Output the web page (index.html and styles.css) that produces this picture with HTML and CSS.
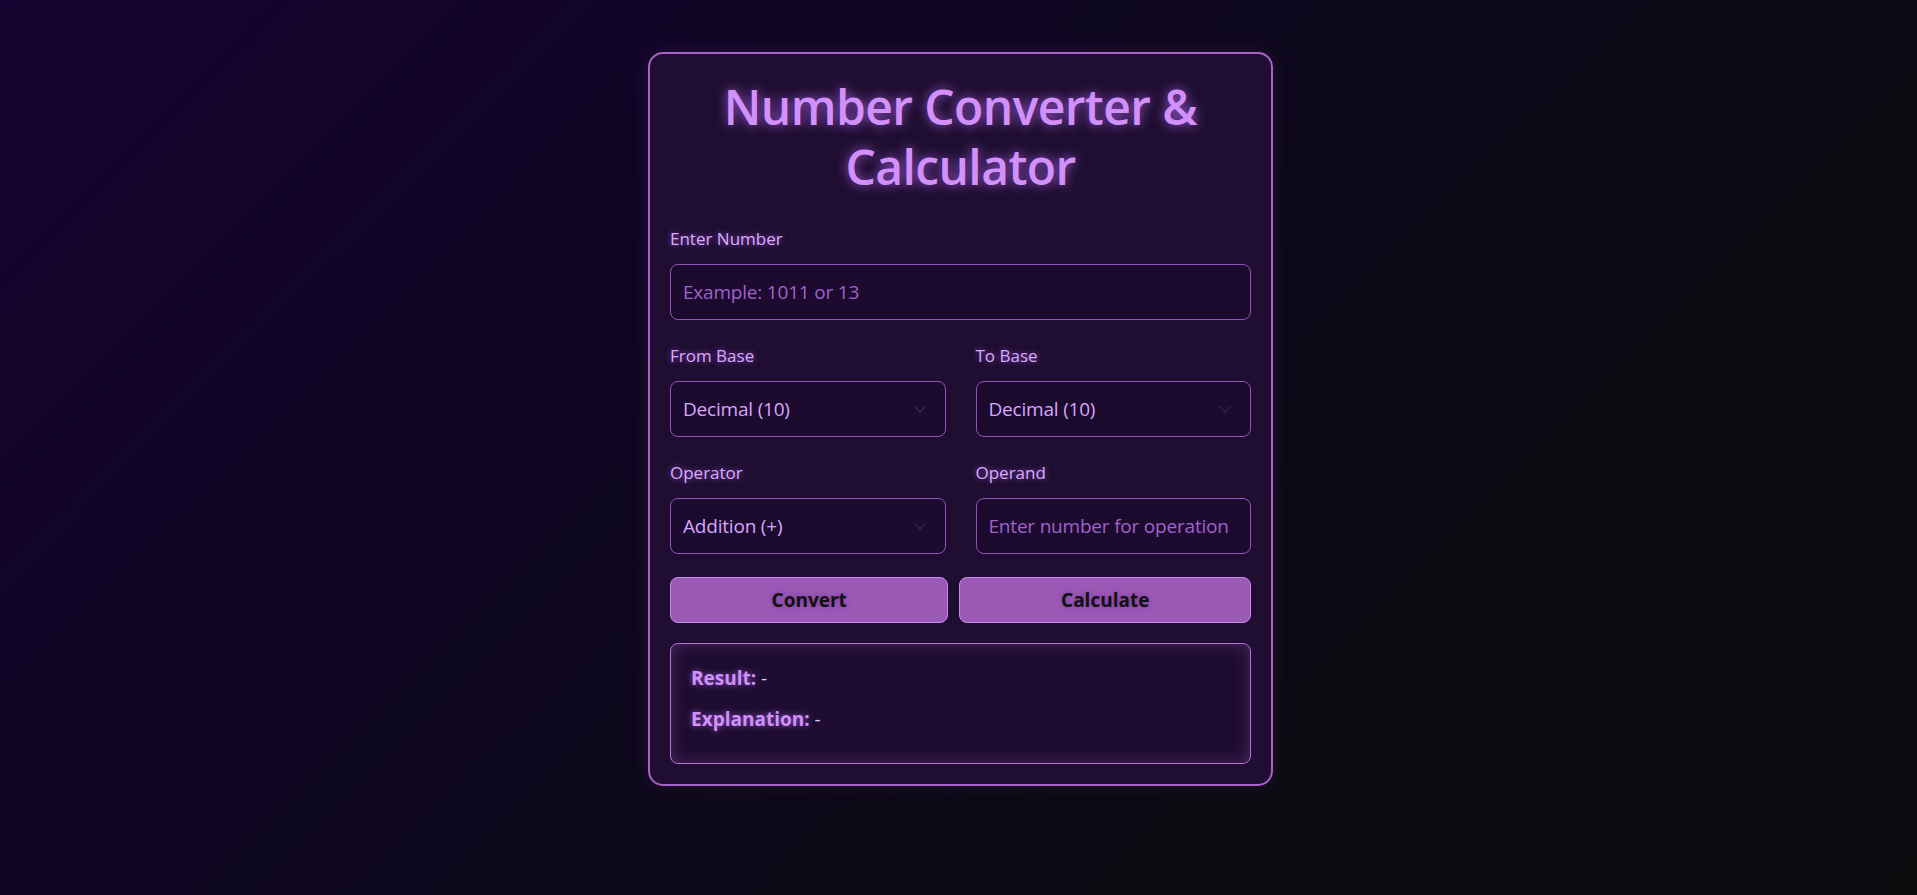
FILE: index.html
```html
<!DOCTYPE html>
<html lang="en">
<head>
    <meta charset="UTF-8">
    <meta name="viewport" content="width=device-width, initial-scale=1.0">
    <title>Number Converter &amp; Calculator</title>
    <link rel="stylesheet" href="styles.css">
</head>
<body>

    <div class="container">
        <h1>Number Converter &amp; Calculator</h1>

        <div class="form-group">
            <label for="number">Enter Number</label>
            <input type="text" id="number" placeholder="Example: 1011 or 13">
        </div>

        <div class="row">
            <div class="form-group">
                <label for="fromBase">From Base</label>
                <div class="select-wrap">
                    <select id="fromBase">
                        <option value="2">Binary (2)</option>
                        <option value="8">Octal (8)</option>
                        <option value="10" selected>Decimal (10)</option>
                        <option value="16">Hexadecimal (16)</option>
                    </select>
                </div>
            </div>
            <div class="form-group">
                <label for="toBase">To Base</label>
                <div class="select-wrap">
                    <select id="toBase">
                        <option value="2">Binary (2)</option>
                        <option value="8">Octal (8)</option>
                        <option value="10" selected>Decimal (10)</option>
                        <option value="16">Hexadecimal (16)</option>
                    </select>
                </div>
            </div>
        </div>

        <div class="row">
            <div class="form-group">
                <label for="operator">Operator</label>
                <div class="select-wrap">
                    <select id="operator">
                        <option value="+">Addition (+)</option>
                        <option value="-">Subtraction (-)</option>
                        <option value="*">Multiplication (*)</option>
                        <option value="/">Division (/)</option>
                    </select>
                </div>
            </div>
            <div class="form-group">
                <label for="operand">Operand</label>
                <input type="text" id="operand" placeholder="Enter number for operation">
            </div>
        </div>

        <div class="buttons">
            <button id="convertBtn">Convert</button>
            <button id="calcBtn">Calculate</button>
        </div>

        <div class="result">
            <p><strong>Result:</strong> <span id="result">-</span></p>
            <p><strong>Explanation:</strong> <span id="explanation">-</span></p>
        </div>
    </div>

</body>
</html>
```

FILE: styles.css
```css
* {
    box-sizing: border-box;
}

body {
    margin: 0;
    min-height: 100vh;
    padding: 52px 0 0 4px;
    font-family: "Segoe UI", "Open Sans", sans-serif;
    background: linear-gradient(135deg, #160331 0%, #0e0720 40%, #0c0a12 70%, #0c0c0f 100%);
    color: #d9a8ff;
}

.container {
    width: 625px;
    margin: 0 auto;
    padding: 20px;
    background: #1f0e31;
    border: 2px solid #a862c8;
    border-radius: 15px;
    box-shadow: 0 0 20px rgba(155, 89, 182, 0.15);
}

h1 {
    margin: 0 0 29px;
    padding-top: 3px;
    font-size: 48px;
    line-height: 60px;
    font-weight: 600;
    letter-spacing: -0.6px;
    text-align: center;
    color: #d291fa;
    text-shadow: 0 0 12px rgba(190, 110, 255, 0.8);
}

.form-group {
    margin-bottom: 23px;
}

label {
    display: block;
    margin-bottom: 13px;
    font-size: 17px;
    line-height: 25px;
    color: #dbaaff;
    text-shadow: 0 0 6px rgba(180, 100, 240, 0.7);
}

input,
select {
    width: 100%;
    height: 56px;
    padding: 0 12px;
    font-family: inherit;
    font-size: 19px;
    letter-spacing: -0.2px;
    color: #d8a6ff;
    background: #1c0b2e;
    border: 1px solid #9552b8;
    border-radius: 8px;
    outline: none;
}

input::placeholder {
    color: #a062cc;
}

select {
    appearance: none;
    -webkit-appearance: none;
    cursor: pointer;
}

.select-wrap {
    position: relative;
}

/* chevron drawn over the select */
.select-wrap::after {
    content: "";
    position: absolute;
    right: 22px;
    top: 22px;
    width: 7px;
    height: 7px;
    border-right: 1.5px solid #43265f;
    border-bottom: 1.5px solid #43265f;
    transform: rotate(45deg);
    pointer-events: none;
}

.row {
    display: flex;
    gap: 30px;
}

.row .form-group {
    flex: 1;
}

.buttons {
    display: flex;
    gap: 11px;
    margin-bottom: 20px;
}

.buttons button {
    flex: 1 1 auto;
    padding: 10px 0;
    font-family: inherit;
    font-size: 19px;
    line-height: 24px;
    font-weight: 700;
    color: #111;
    background: #9b59b6;
    border: 1px solid #c98af0;
    border-radius: 8px;
    text-shadow: 0 0 5px rgba(120, 50, 160, 0.9);
    cursor: pointer;
}

.result {
    padding: 20px 20px 17px;
    background: #1e0d30;
    border: 1px solid #b473dc;
    border-radius: 8px;
    box-shadow: inset 0 0 16px rgba(155, 89, 182, 0.35);
}

.result p {
    margin: 0 0 13px;
    font-size: 19px;
    line-height: 28px;
    color: #e2c2ff;
}

.result strong {
    color: #d291fa;
    text-shadow: 0 0 6px rgba(190, 110, 255, 0.7);
}
```
